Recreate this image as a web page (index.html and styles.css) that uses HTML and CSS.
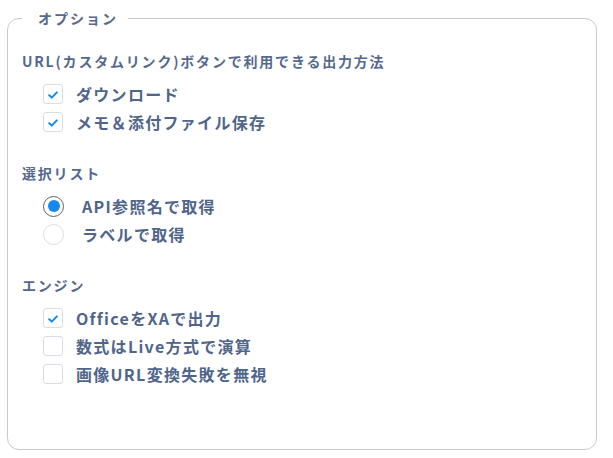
FILE: index.html
```html
<!DOCTYPE html>
<html lang="ja">
<head>
<meta charset="utf-8">
<title>オプション</title>
<link rel="stylesheet" href="styles.css">
</head>
<body>
<div class="page">
  <fieldset class="options">
    <legend class="options-legend">オプション</legend>

    <section class="group">
      <h3 class="group-title">URL(カスタムリンク)ボタンで利用できる出力方法</h3>
      <ul class="choice-list">
        <li><label class="choice"><span class="checkbox is-checked"><svg viewBox="0 0 10 8"><path d="M1.2 4.2 L3.8 6.6 L8.8 1.4"/></svg></span><span class="choice-text">ダウンロード</span></label></li>
        <li><label class="choice"><span class="checkbox is-checked"><svg viewBox="0 0 10 8"><path d="M1.2 4.2 L3.8 6.6 L8.8 1.4"/></svg></span><span class="choice-text">メモ＆添付ファイル保存</span></label></li>
      </ul>
    </section>

    <section class="group">
      <h3 class="group-title">選択リスト</h3>
      <ul class="choice-list">
        <li><label class="choice choice-radio"><span class="radio is-checked"></span><span class="choice-text">API参照名で取得</span></label></li>
        <li><label class="choice choice-radio"><span class="radio"></span><span class="choice-text">ラベルで取得</span></label></li>
      </ul>
    </section>

    <section class="group">
      <h3 class="group-title">エンジン</h3>
      <ul class="choice-list">
        <li><label class="choice"><span class="checkbox is-checked"><svg viewBox="0 0 10 8"><path d="M1.2 4.2 L3.8 6.6 L8.8 1.4"/></svg></span><span class="choice-text">OfficeをXAで出力</span></label></li>
        <li><label class="choice"><span class="checkbox"></span><span class="choice-text">数式はLive方式で演算</span></label></li>
        <li><label class="choice"><span class="checkbox"></span><span class="choice-text">画像URL変換失敗を無視</span></label></li>
      </ul>
    </section>
  </fieldset>
</div>
</body>
</html>
```
FILE: styles.css
```css
html, body {
  margin: 0;
  padding: 0;
  background: #ffffff;
}

body {
  font-family: "Noto Sans CJK JP", "Noto Sans", sans-serif;
  color: #54698d;
}

.page {
  padding: 8px 16px 8px 7px;
  height: 458px;
  box-sizing: border-box;
  display: flex;
  flex-direction: column;
}

.options {
  flex: 1;
  margin: 0;
  padding: 0 14px 0 14px;
  border: 1px solid #c9c9c9;
  border-radius: 12px;
  min-width: 0;
}

.options-legend {
  padding: 0 10px 0 16px;
  font-size: 14px;
  line-height: 20px;
  font-weight: 700;
  letter-spacing: 2px;
  color: #54698d;
}

.group {
  margin-bottom: 27px;
}

.group:first-of-type {
  margin-top: 23px;
}

.group-title {
  margin: 0 0 9px 0;
  font-size: 14px;
  line-height: 20px;
  font-weight: 700;
  letter-spacing: 1.8px;
  color: #54698d;
}

.choice-list {
  list-style: none;
  margin: 0;
  padding: 0 0 0 21px;
}

.choice {
  display: flex;
  align-items: center;
  height: 28px;
  gap: 13px;
}

.choice-radio {
  gap: 18px;
}

.choice-text {
  font-size: 16px;
  line-height: 20px;
  font-weight: 700;
  letter-spacing: 1.3px;
  color: #50658a;
}

.checkbox {
  width: 20px;
  height: 20px;
  box-sizing: border-box;
  border: 1px solid #d8dde6;
  border-radius: 3px;
  background: #ffffff;
  display: flex;
  align-items: center;
  justify-content: center;
  flex: none;
}

.checkbox svg {
  width: 10px;
  height: 8px;
  margin-top: 2px;
}

.checkbox path {
  fill: none;
  stroke: #1589ee;
  stroke-width: 2;
  stroke-linecap: round;
  stroke-linejoin: round;
}

.radio {
  width: 21px;
  height: 21px;
  box-sizing: border-box;
  border: 1px solid #d8dde6;
  border-radius: 50%;
  background: #ffffff;
  display: flex;
  align-items: center;
  justify-content: center;
  flex: none;
}

.radio.is-checked {
  border-color: #5f5f5f;
}

.radio.is-checked::after {
  content: "";
  width: 12px;
  height: 12px;
  border-radius: 50%;
  background: #1589ee;
}
```
